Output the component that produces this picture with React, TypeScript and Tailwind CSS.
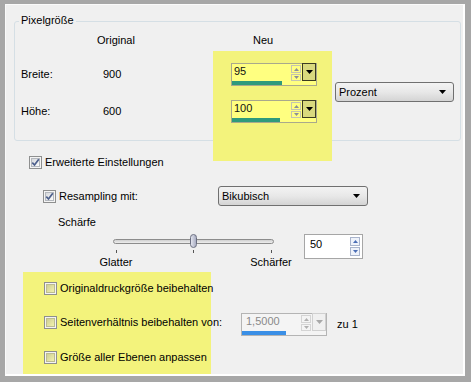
import React from "react";

function Tri({ color = "#000" }: { color?: string }) {
  return (
    <svg width="7" height="4" viewBox="0 0 7 4">
      <path d="M0 0H7L3.5 4Z" fill={color} />
    </svg>
  );
}

function SmallArrow({ up, color }: { up?: boolean; color: string }) {
  return (
    <svg width="5" height="3" viewBox="0 0 5 3">
      <path d={up ? "M0 3H5L2.5 0Z" : "M0 0H5L2.5 3Z"} fill={color} />
    </svg>
  );
}

function Check({ checked, tint }: { checked?: boolean; tint?: boolean }) {
  return (
    <div className="relative w-[13px] h-[13px] shrink-0 border border-[#8e8f8f] bg-[#f4f4f4] p-[1px]">
      <div
        className={
          tint
            ? "w-full h-full border border-[#bcbc90] bg-gradient-to-br from-[#cfcf94] to-[#f2f2ae]"
            : "w-full h-full border border-[#b4b8be] bg-gradient-to-br from-[#d6d8dc] to-[#fbfbfb]"
        }
      />
      {checked && (
        <svg className="absolute left-[1px] top-[1px]" width="9" height="9" viewBox="0 0 9 9">
          <path d="M1.3 4.6L3.5 7L7.8 1.2" stroke="#4c5f8c" strokeWidth="1.7" fill="none" />
        </svg>
      )}
    </div>
  );
}

function Combo({ label, className }: { label: string; className: string }) {
  return (
    <div
      className={
        "flex items-center justify-between h-[20px] rounded-[3px] border border-[#707070] bg-gradient-to-b from-[#f3f3f3] via-[#e8e8e8] to-[#d4d4d4] pl-[3px] pr-[7px] " +
        className
      }
    >
      <span>{label}</span>
      <Tri />
    </div>
  );
}

function YellowSpin({ value, barClass }: { value: string; barClass: string }) {
  return (
    <div className="w-[86px] h-[23px] border border-[#a9a98c] bg-[#ffff80] flex flex-col">
      <div className="flex h-[17px]">
        <div className="flex-1 pl-[2px] pt-[1px] text-[#111]">{value}</div>
        <div className="w-[11px] flex flex-col gap-[1px] pt-[1px] pr-[1px]">
          <div className="h-[8px] border border-[#c4c4b0] flex items-center justify-center">
            <SmallArrow up color="#8a8f98" />
          </div>
          <div className="h-[7px] border border-[#c4c4b0] flex items-center justify-center">
            <SmallArrow color="#8a8f98" />
          </div>
        </div>
        <div className="w-[14px] h-[18px] -mt-[1px] border border-[#3b3b22] bg-[#d9d97e] flex items-center justify-center">
          <Tri />
        </div>
      </div>
      <div className="mt-auto h-[4px] flex">
        <div className={"h-full bg-[#2f9a7c] " + barClass} />
      </div>
    </div>
  );
}

export default function App() {
  return (
    <div className="w-[471px] h-[382px] bg-[#a7a7a7] pt-[4px] pl-[5px] pr-[6px] pb-[6px] font-[Liberation_Sans,Arial,sans-serif] text-[11px] leading-[13px] text-black">
      <div className="relative w-full h-full border-l border-t border-[#fafafa] border-r-2 border-b-2 border-r-white border-b-white bg-[#f0f0f0]">
        {/* highlight markers */}
        <div className="absolute left-[207px] top-[46px] w-[119px] h-[110px] bg-[#f3f37c]" />
        <div className="absolute left-[17px] top-[267px] w-[188px] h-[102px] bg-[#f3f37c]" />

        {/* Pixelgröße group */}
        <div className="ml-[8px] mt-[16px] w-[447px] h-[120px] border border-[#d5dfe5] rounded-[3px]">
          <div className="relative pl-[6px] pt-[11px]">
            <div className="absolute left-[4px] top-[-8px] px-[2px] bg-[#f0f0f0]">Pixelgröße</div>
            <div className="flex items-start">
              <div>
                <div className="flex items-center h-[14px]">
                  <div className="w-[76px]" />
                  <div className="w-[134px]">Original</div>
                  <div className="pl-[22px]">Neu</div>
                </div>
                <div className="flex items-center h-[23px] mt-[16px]">
                  <div className="w-[82px]">Breite:</div>
                  <div className="w-[128px]">900</div>
                  <YellowSpin value="95" barClass="w-[50px]" />
                </div>
                <div className="flex items-center h-[23px] mt-[14px]">
                  <div className="w-[82px]">Höhe:</div>
                  <div className="w-[128px]">600</div>
                  <YellowSpin value="100" barClass="w-[48px]" />
                </div>
              </div>
              <Combo label="Prozent" className="ml-[18px] mt-[49px] w-[119px]" />
            </div>
          </div>
        </div>

        {/* lower settings */}
        <div className="relative">
          <div className="ml-[23px] mt-[15px] flex items-center h-[13px]">
            <Check checked />
            <span className="ml-[3px]">Erweiterte Einstellungen</span>
          </div>

          <div className="ml-[37px] mt-[17px] flex items-center h-[20px]">
            <Check checked />
            <span className="ml-[3px] w-[159px]">Resampling mit:</span>
            <Combo label="Bikubisch" className="w-[150px]" />
          </div>

          <div className="ml-[52px] mt-[9px] h-[14px] flex items-center">Schärfe</div>

          <div className="ml-[80px] mt-[5px] flex items-start">
            <div className="w-[215px]">
              <div className="relative h-[21px]">
                <div className="absolute left-[27px] top-[5px] w-[161px] h-[5px] rounded-full border border-[#8c8c8c] bg-gradient-to-b from-[#d0d0d0] to-[#eeeeee]" />
                <div className="absolute left-[30px] top-[16px] w-[1px] h-[3px] bg-[#555]" />
                <div className="absolute left-[107px] top-[16px] w-[1px] h-[3px] bg-[#555]" />
                <div className="absolute left-[185px] top-[16px] w-[1px] h-[3px] bg-[#555]" />
                <div className="absolute left-[104px] top-0 w-[7px] h-[14px] rounded-full border border-[#6a6e80] bg-gradient-to-r from-[#e2e4ee] to-[#a9adc2]" />
              </div>
              <div className="flex h-[14px] items-center">
                <div className="w-[60px] text-center">Glatter</div>
                <div className="ml-[95px] w-[60px] text-center">Schärfer</div>
              </div>
            </div>
            <div className="ml-[3px] w-[59px] h-[25px] border border-[#a6a6a6] bg-white flex">
              <div className="flex-1 pl-[5px] pt-[3px]">50</div>
              <div className="w-[10px] flex flex-col gap-[1px] pt-[2px] mr-[2px]">
                <div className="h-[9px] border border-[#a9b4cc] bg-[#eef2fa] flex items-center justify-center">
                  <SmallArrow up color="#4a6db5" />
                </div>
                <div className="h-[9px] border border-[#a9b4cc] bg-[#eef2fa] flex items-center justify-center">
                  <SmallArrow color="#4a6db5" />
                </div>
              </div>
            </div>
          </div>

          <div className="ml-[38px] mt-[13px] flex items-center h-[13px]">
            <Check tint />
            <span className="ml-[3px]">Originaldruckgröße beibehalten</span>
          </div>

          <div className="ml-[38px] mt-[18px] flex items-start h-[23px]">
            <div className="mt-[3px] flex items-center">
              <Check tint />
              <span className="ml-[3px] w-[181px]">Seitenverhältnis beibehalten von:</span>
            </div>
            <div className="w-[86px] h-[23px] border border-[#b4b4b4] bg-[#f4f4f4] flex flex-col">
              <div className="flex h-[17px]">
                <div className="flex-1 pl-[4px] pt-[1px] text-[#8a8a8a]">1,5000</div>
                <div className="w-[11px] flex flex-col gap-[1px] pt-[1px] pr-[1px]">
                  <div className="h-[8px] border border-[#d4d4d4] flex items-center justify-center">
                    <SmallArrow up color="#b0b0b0" />
                  </div>
                  <div className="h-[7px] border border-[#d4d4d4] flex items-center justify-center">
                    <SmallArrow color="#b0b0b0" />
                  </div>
                </div>
                <div className="w-[14px] h-[18px] -mt-[1px] border border-[#d0d0d0] bg-[#f0f0f0] flex items-center justify-center">
                  <Tri color="#a8a8a8" />
                </div>
              </div>
              <div className="mt-auto h-[4px] flex">
                <div className="h-full w-[44px] bg-[#3a8fe6]" />
              </div>
            </div>
            <span className="ml-[10px] self-center">zu 1</span>
          </div>

          <div className="ml-[38px] mt-[15px] flex items-center h-[13px]">
            <Check tint />
            <span className="ml-[3px]">Größe aller Ebenen anpassen</span>
          </div>
        </div>
      </div>
    </div>
  );
}
